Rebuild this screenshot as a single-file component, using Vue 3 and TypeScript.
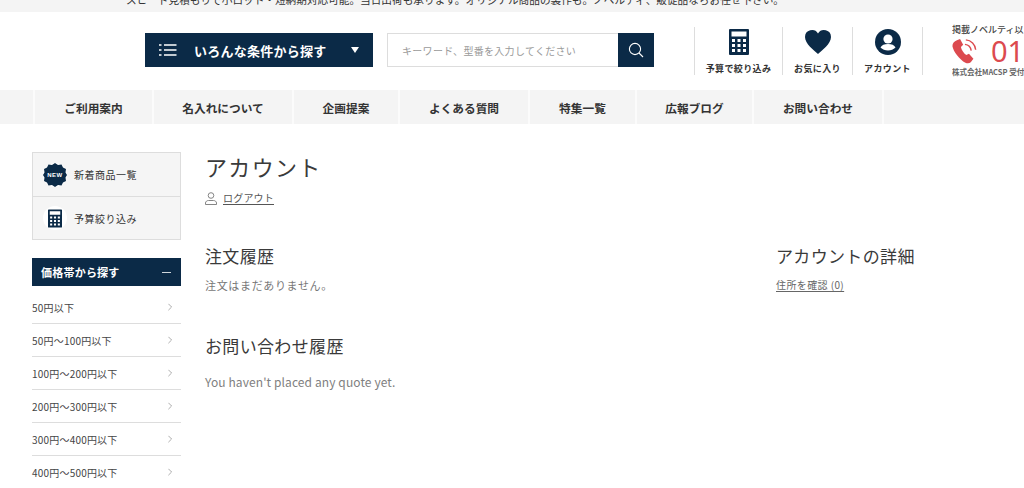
<template>
  <div class="page">
    <div class="announce">
      <p>スピード見積もりで小ロット・短納期対応可能。当日出荷も承ります。オリジナル商品の製作も。ノベルティ、販促品ならお任せ下さい。</p>
    </div>

    <header class="header">
      <button class="finder">
        <svg class="finder-icon" width="18" height="12" viewBox="0 0 18 12">
          <path d="M0 1h2.500M0 6h2.500M0 11h2.500M5 1h12.500M5 6h12.500M5 11h12.500" stroke="#fff" stroke-width="1.700" fill="none" />
        </svg>
        <span class="finder-label">いろんな条件から探す</span>
        <span class="finder-caret"></span>
      </button>
      <form class="search" @submit.prevent>
        <input class="search-input" placeholder="キーワード、型番を入力してください" />
        <button class="search-btn" aria-label="検索">
          <svg width="16" height="16" viewBox="0 0 16 16" fill="none" stroke="#fff" stroke-width="1.100">
            <circle cx="7" cy="7" r="5.600" />
            <path d="M11 11l4 4" />
          </svg>
        </button>
      </form>
      <div class="tools">
        <a class="tool tool-calc">
          <svg width="20" height="26" viewBox="0 0 20 26">
            <path fill="#0b2a47" fill-rule="evenodd" :d="calcPath" />
          </svg>
          <span>予算で絞り込み</span>
        </a>
        <a class="tool tool-fav">
          <svg width="26" height="24" viewBox="0 0 26 24">
            <path fill="#0b2a47" d="M13 24C9 20 0 14 0 7a7 7 0 0 1 13-3.500A7 7 0 0 1 26 7c0 7-9 13-13 17z" />
          </svg>
          <span>お気に入り</span>
        </a>
        <a class="tool tool-account">
          <svg width="26" height="26" viewBox="0 0 26 26">
            <circle cx="13" cy="13" r="13" fill="#0b2a47" />
            <circle cx="13" cy="10" r="4.600" fill="#fff" />
            <path fill="#fff" d="M5.500 18.500c1-2.500 4-3.500 7.500-3.500s6.500 1 7.500 3.500C18.500 20.500 16 21.500 13 21.500s-5.500-1-7.500-3z" />
          </svg>
          <span>アカウント</span>
        </a>
      </div>
      <div class="phone">
        <p class="phone-top">掲載ノベルティ以</p>
        <div class="phone-main">
          <svg width="25" height="25" viewBox="0 0 27 28" fill="none">
            <path fill="#dc4a4f" d="M5 1.500 8.500 0l3.500 6.500-2.500 2.500c.5 3 3 7 6 9l3-1.500 5 5.500-3 4c-1.500 1.500-4 1.500-6 .5C8 23 1 14 0 8c-.2-3 2-5.500 5-6.500z" />
            <path stroke="#dc4a4f" stroke-width="1.600" d="M14 6c4 .5 6.500 3 7 7M15 1c6 .5 10.500 5 11 11" />
          </svg>
          <span class="phone-num">01</span>
        </div>
        <p class="phone-bottom">株式会社MACSP 受付</p>
      </div>
    </header>

    <nav class="nav">
      <a v-for="item in navItems" :key="item.label" class="nav-item" :style="{ width: item.width + 'px' }">{{ item.label }}</a>
      <span class="nav-rest"></span>
    </nav>

    <div class="body">
      <aside class="side">
        <div class="quick">
          <a class="quick-row">
            <span class="quick-icon">
              <svg width="24" height="24" viewBox="0 0 24 24">
                <path fill="#0b2a47" d="M12 0l3 2 3.500-.5 1.500 3 3 1.500-.5 3.500L24 12l-1.500 2.500.5 3.500-3 1.500-1.500 3-3.500-.5-3 2-3-2-3.500.5-1.500-3-3-1.500.5-3.500L0 12l1.500-2.500L1 6l3-1.500 1.500-3L9 2z" />
                <text x="12" y="14" text-anchor="middle" class="new-text">NEW</text>
              </svg>
            </span>
            <span>新着商品一覧</span>
          </a>
          <a class="quick-row">
            <span class="quick-icon">
              <svg width="14" height="19" viewBox="0 0 20 26">
                <path fill="#0b2a47" fill-rule="evenodd" :d="calcPath" />
              </svg>
            </span>
            <span>予算絞り込み</span>
          </a>
        </div>

        <div class="price-head">
          <span>価格帯から探す</span>
          <i class="minus"></i>
        </div>
        <a v-for="p in prices" :key="p" class="price-row">
          <span>{{ p }}</span>
          <svg width="4" height="8" viewBox="0 0 5 9" fill="none" stroke="#999" stroke-width="1">
            <path d="M.5.5l4 4-4 4" />
          </svg>
        </a>
      </aside>

      <main class="content">
        <h1 class="title">アカウント</h1>
        <a class="logout">
          <svg width="12" height="13" viewBox="0 0 12 13" fill="none" stroke="#777" stroke-width="0.900">
            <circle cx="6" cy="3.500" r="2.800" />
            <path d="M.5 12.500v-1.500c0-1.500 1.500-2.500 3-2.500h5c1.500 0 3 1 3 2.500v1.500z" />
          </svg>
          <span>ログアウト</span>
        </a>

        <div class="columns">
          <div class="col-main">
            <section class="block">
              <h2>注文履歴</h2>
              <p>注文はまだありません。</p>
            </section>
            <section class="block block-quote">
              <h2>お問い合わせ履歴</h2>
              <p class="quote-empty">You haven't placed any quote yet.</p>
            </section>
          </div>
          <div class="col-side">
            <h2>アカウントの詳細</h2>
            <a class="address">住所を確認 (0)</a>
          </div>
        </div>
      </main>
    </div>
  </div>
</template>

<script setup lang="ts">
interface NavItem {
  label: string;
  width: number;
}

const calcPath =
  'M1 0h18a1 1 0 0 1 1 1v24a1 1 0 0 1-1 1H1a1 1 0 0 1-1-1V1a1 1 0 0 1 1-1zM2.500 2.500v5h15v-5zM3 10v3h3v-3zM8.500 10v3h3v-3zM14 10v3h3v-3zM3 15v3h3v-3zM8.500 15v3h3v-3zM14 15v3h3v-3zM3 20v3h3v-3zM8.500 20v3h3v-3zM14 20v3h3v-3z';

const navItems: NavItem[] = [
  { label: 'ご利用案内', width: 119 },
  { label: '名入れについて', width: 140 },
  { label: '企画提案', width: 106 },
  { label: 'よくある質問', width: 130 },
  { label: '特集一覧', width: 107 },
  { label: '広報ブログ', width: 117 },
  { label: 'お問い合わせ', width: 130 },
];

const prices: string[] = [
  '50円以下',
  '50円〜100円以下',
  '100円〜200円以下',
  '200円〜300円以下',
  '300円〜400円以下',
  '400円〜500円以下',
];
</script>

<style>
html, body { margin: 0; background: #fff; overflow: hidden; }
</style>

<style scoped>
.page {
  width: 1024px; height: 488px; overflow: hidden;
  font-family: "Noto Sans CJK JP", "Noto Sans", sans-serif;
  color: #333;
}
p, h1, h2 { margin: 0; font-weight: 400; }
a { color: inherit; }

.announce {
  height: 12px; background: #f4f4f4; overflow: hidden;
  display: flex; justify-content: center; align-items: flex-end;
  padding-right: 114px;
}
.announce p { font-size: 10.650px; line-height: 16px; white-space: nowrap; color: #333; margin-bottom: 4px; }

.header {
  height: 78px; box-sizing: border-box; display: flex; align-items: center;
  padding: 0 0 2px 145px; background: #fff; overflow: hidden;
}
.finder {
  width: 228px; height: 34px; flex: none; border: none; background: #0b2a47; color: #fff;
  display: flex; align-items: center; padding: 0 14px; font: inherit;
}
.finder-icon { flex: none; }
.finder-label { font-size: 13px; font-weight: 700; letter-spacing: 0.02em; margin-left: 17px; white-space: nowrap; }
.finder-caret {
  margin-left: auto;
  border-left: 4px solid transparent; border-right: 4px solid transparent; border-top: 6px solid #fff;
}

.search { display: flex; width: 267px; height: 34px; margin-left: 14px; flex: none; }
.search-input {
  flex: 1; min-width: 0; box-sizing: border-box; border: 1px solid #ddd; border-right: none; outline: none;
  padding: 0 14px; font: inherit; font-size: 10px; letter-spacing: 0.03em; background: #fff;
}
.search-input::placeholder { color: #9a9a9a; opacity: 1; }
.search-btn {
  width: 36px; flex: none; border: none; background: #0b2a47; padding: 0;
  display: flex; align-items: center; justify-content: center;
}

.tools { display: flex; margin-left: 40px; flex: none; height: 48px; margin-top: 2px; }
.tool {
  box-sizing: border-box; border-left: 1px solid #ddd;
  display: flex; flex-direction: column; align-items: center; justify-content: space-between;
  font-size: 9px; font-weight: 700; letter-spacing: 0.04em; color: #333; white-space: nowrap;
  line-height: 13px; padding-top: 2px;
}
.tool-calc { width: 88px; }
.tool-fav { width: 70px; }
.tool-account { width: 71px; border-right: 1px solid #ddd; }
.tool svg { flex: none; }
.tool-fav svg { margin-top: 1px; }

.phone { margin-left: 29px; flex: none; width: 73px; margin-top: 2px; overflow: hidden; }
.phone-top { font-size: 9px; line-height: 12px; color: #444; white-space: nowrap; font-weight: 500; }
.phone-main { display: flex; align-items: center; height: 28px; margin-top: 1px; }
.phone-num { font-family: "Noto Sans", sans-serif; font-size: 29px; line-height: 28px; color: #dc4a4f; margin-left: 14px; white-space: nowrap; }
.phone-bottom { font-size: 7.500px; line-height: 12px; color: #666; white-space: nowrap; font-weight: 700; margin-top: 1px; }

.nav { height: 34px; display: flex; background: #f4f4f4; padding-left: 33px; }
.nav-item {
  box-sizing: border-box; flex: none; border-left: 2px solid #fbfbfb;
  display: flex; align-items: center; justify-content: center;
  font-size: 11.700px; font-weight: 700; color: #333; white-space: nowrap;
}
.nav-rest { border-left: 2px solid #fbfbfb; }

.body { display: flex; padding: 28px 0 0 32px; }
.side { width: 149px; flex: none; }
.quick { box-sizing: border-box; height: 88px; border: 1px solid #ddd; background: #f5f5f5; }
.quick-row {
  height: 43px; box-sizing: border-box; display: flex; align-items: center;
  padding-left: 10px; font-size: 10px; letter-spacing: 0.05em; color: #333;
}
.quick-row + .quick-row { border-top: 1px solid #ddd; }
.quick-icon {
  width: 24px; height: 24px; border-radius: 50%; background: #fff; flex: none; margin-right: 7px;
  display: flex; align-items: center; justify-content: center;
}
.new-text { font: 700 6px "Liberation Sans", sans-serif; fill: #fff; }

.price-head {
  height: 28px; margin-top: 18px; background: #0b2a47; color: #fff;
  display: flex; align-items: center; justify-content: space-between; padding: 0 9px;
  font-size: 11px; font-weight: 700; letter-spacing: 0.02em;
}
.minus { width: 9px; height: 1px; background: #cfd6dc; margin-right: 1px; }
.price-row {
  height: 33px; box-sizing: border-box; border-bottom: 1px solid #ddd;
  display: flex; align-items: center; justify-content: space-between; padding-right: 9px;
  font-size: 10px; letter-spacing: 0.02em; color: #444;
}
.price-row:first-of-type { height: 38px; padding-top: 5px; }

.content { margin: -2px 0 0 24px; flex: 1; min-width: 0; }
.title { font-size: 22px; line-height: 32px; letter-spacing: 0.06em; color: #3a3a3a; }
.logout { display: flex; align-items: center; margin-top: 8px; font-size: 10px; line-height: 16px; letter-spacing: 0.02em; color: #555; height: 16px; }
.logout span { margin-left: 6px; text-decoration: underline; text-underline-offset: 2px; }
.columns { display: flex; margin-top: 38px; }
.col-main { width: 571px; flex: none; }
.block h2, .col-side h2 { font-size: 17px; line-height: 24px; letter-spacing: 0.02em; color: #3a3a3a; }
.block p { font-size: 11px; line-height: 18px; letter-spacing: 0.06em; color: #777; margin-top: 8px; }
.block-quote { margin-top: 40px; }
.block .quote-empty { font-size: 12px; margin-top: 15px; letter-spacing: 0.1px; color: #808080; }
.address { display: inline-block; margin-top: 8px; font-size: 10px; line-height: 18px; letter-spacing: 0.04em; color: #666; text-decoration: underline; text-underline-offset: 2px; }
</style>
